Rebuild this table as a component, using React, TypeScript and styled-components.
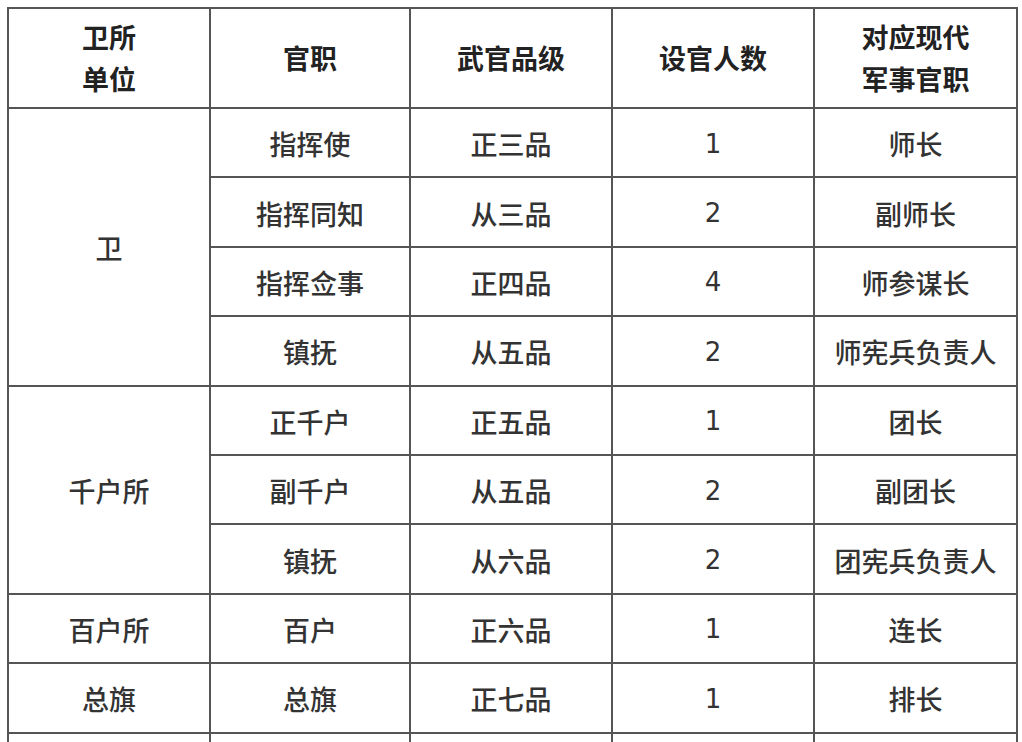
import React from 'react'
import styled, { createGlobalStyle } from 'styled-components'

const GlobalStyle = createGlobalStyle`
  html, body {
    margin: 0;
    padding: 0;
    background: #ffffff;
    overflow: hidden;
  }
  body {
    font-family: "Noto Sans CJK SC", "Noto Sans", sans-serif;
  }
`

const Page = styled.div`
  padding: 7px 0 0 7px;
  width: 1022px;
  height: 742px;
  box-sizing: border-box;
  overflow: hidden;
`

const Table = styled.table`
  border-collapse: collapse;
  table-layout: fixed;
  width: 1009px;
`

const HeadCell = styled.th`
  border: 2px solid #555;
  height: 98px;
  padding: 0;
  font-size: 27px;
  font-weight: 700;
  line-height: 42px;
  color: #222;
  text-align: center;
  vertical-align: middle;
`

const Cell = styled.td<{ $num?: boolean }>`
  border: 2px solid #555;
  padding: 2px 0 0;
  height: 65.4px;
  font-family: ${(p) =>
    p.$num ? '"DejaVu Sans", "Liberation Sans", sans-serif' : '"Noto Sans CJK SC", sans-serif'};
  font-size: ${(p) => (p.$num ? '26px' : '27px')};
  font-weight: ${(p) => (p.$num ? 400 : 500)};
  color: #333;
  text-align: center;
  vertical-align: middle;
`

type Row = { unit?: string; span?: number; title: string; rank: string; count: string; modern: string }

const rows: Row[] = [
  { unit: '卫', span: 4, title: '指挥使', rank: '正三品', count: '1', modern: '师长' },
  { title: '指挥同知', rank: '从三品', count: '2', modern: '副师长' },
  { title: '指挥佥事', rank: '正四品', count: '4', modern: '师参谋长' },
  { title: '镇抚', rank: '从五品', count: '2', modern: '师宪兵负责人' },
  { unit: '千户所', span: 3, title: '正千户', rank: '正五品', count: '1', modern: '团长' },
  { title: '副千户', rank: '从五品', count: '2', modern: '副团长' },
  { title: '镇抚', rank: '从六品', count: '2', modern: '团宪兵负责人' },
  { unit: '百户所', span: 1, title: '百户', rank: '正六品', count: '1', modern: '连长' },
  { unit: '总旗', span: 1, title: '总旗', rank: '正七品', count: '1', modern: '排长' },
]

export default function App() {
  return (
    <>
      <GlobalStyle />
      <Page>
        <Table>
          <colgroup>
            <col style={{ width: 202 }} />
            <col style={{ width: 200 }} />
            <col style={{ width: 202 }} />
            <col style={{ width: 202 }} />
            <col style={{ width: 203 }} />
          </colgroup>
          <thead>
            <tr>
              <HeadCell>卫所<br />单位</HeadCell>
              <HeadCell>官职</HeadCell>
              <HeadCell>武官品级</HeadCell>
              <HeadCell>设官人数</HeadCell>
              <HeadCell>对应现代<br />军事官职</HeadCell>
            </tr>
          </thead>
          <tbody>
            {rows.map((r, i) => (
              <tr key={i}>
                {r.unit && <Cell rowSpan={r.span}>{r.unit}</Cell>}
                <Cell>{r.title}</Cell>
                <Cell>{r.rank}</Cell>
                <Cell $num>{r.count}</Cell>
                <Cell>{r.modern}</Cell>
              </tr>
            ))}
            <tr>
              <Cell />
              <Cell />
              <Cell />
              <Cell />
              <Cell />
            </tr>
          </tbody>
        </Table>
      </Page>
    </>
  )
}
